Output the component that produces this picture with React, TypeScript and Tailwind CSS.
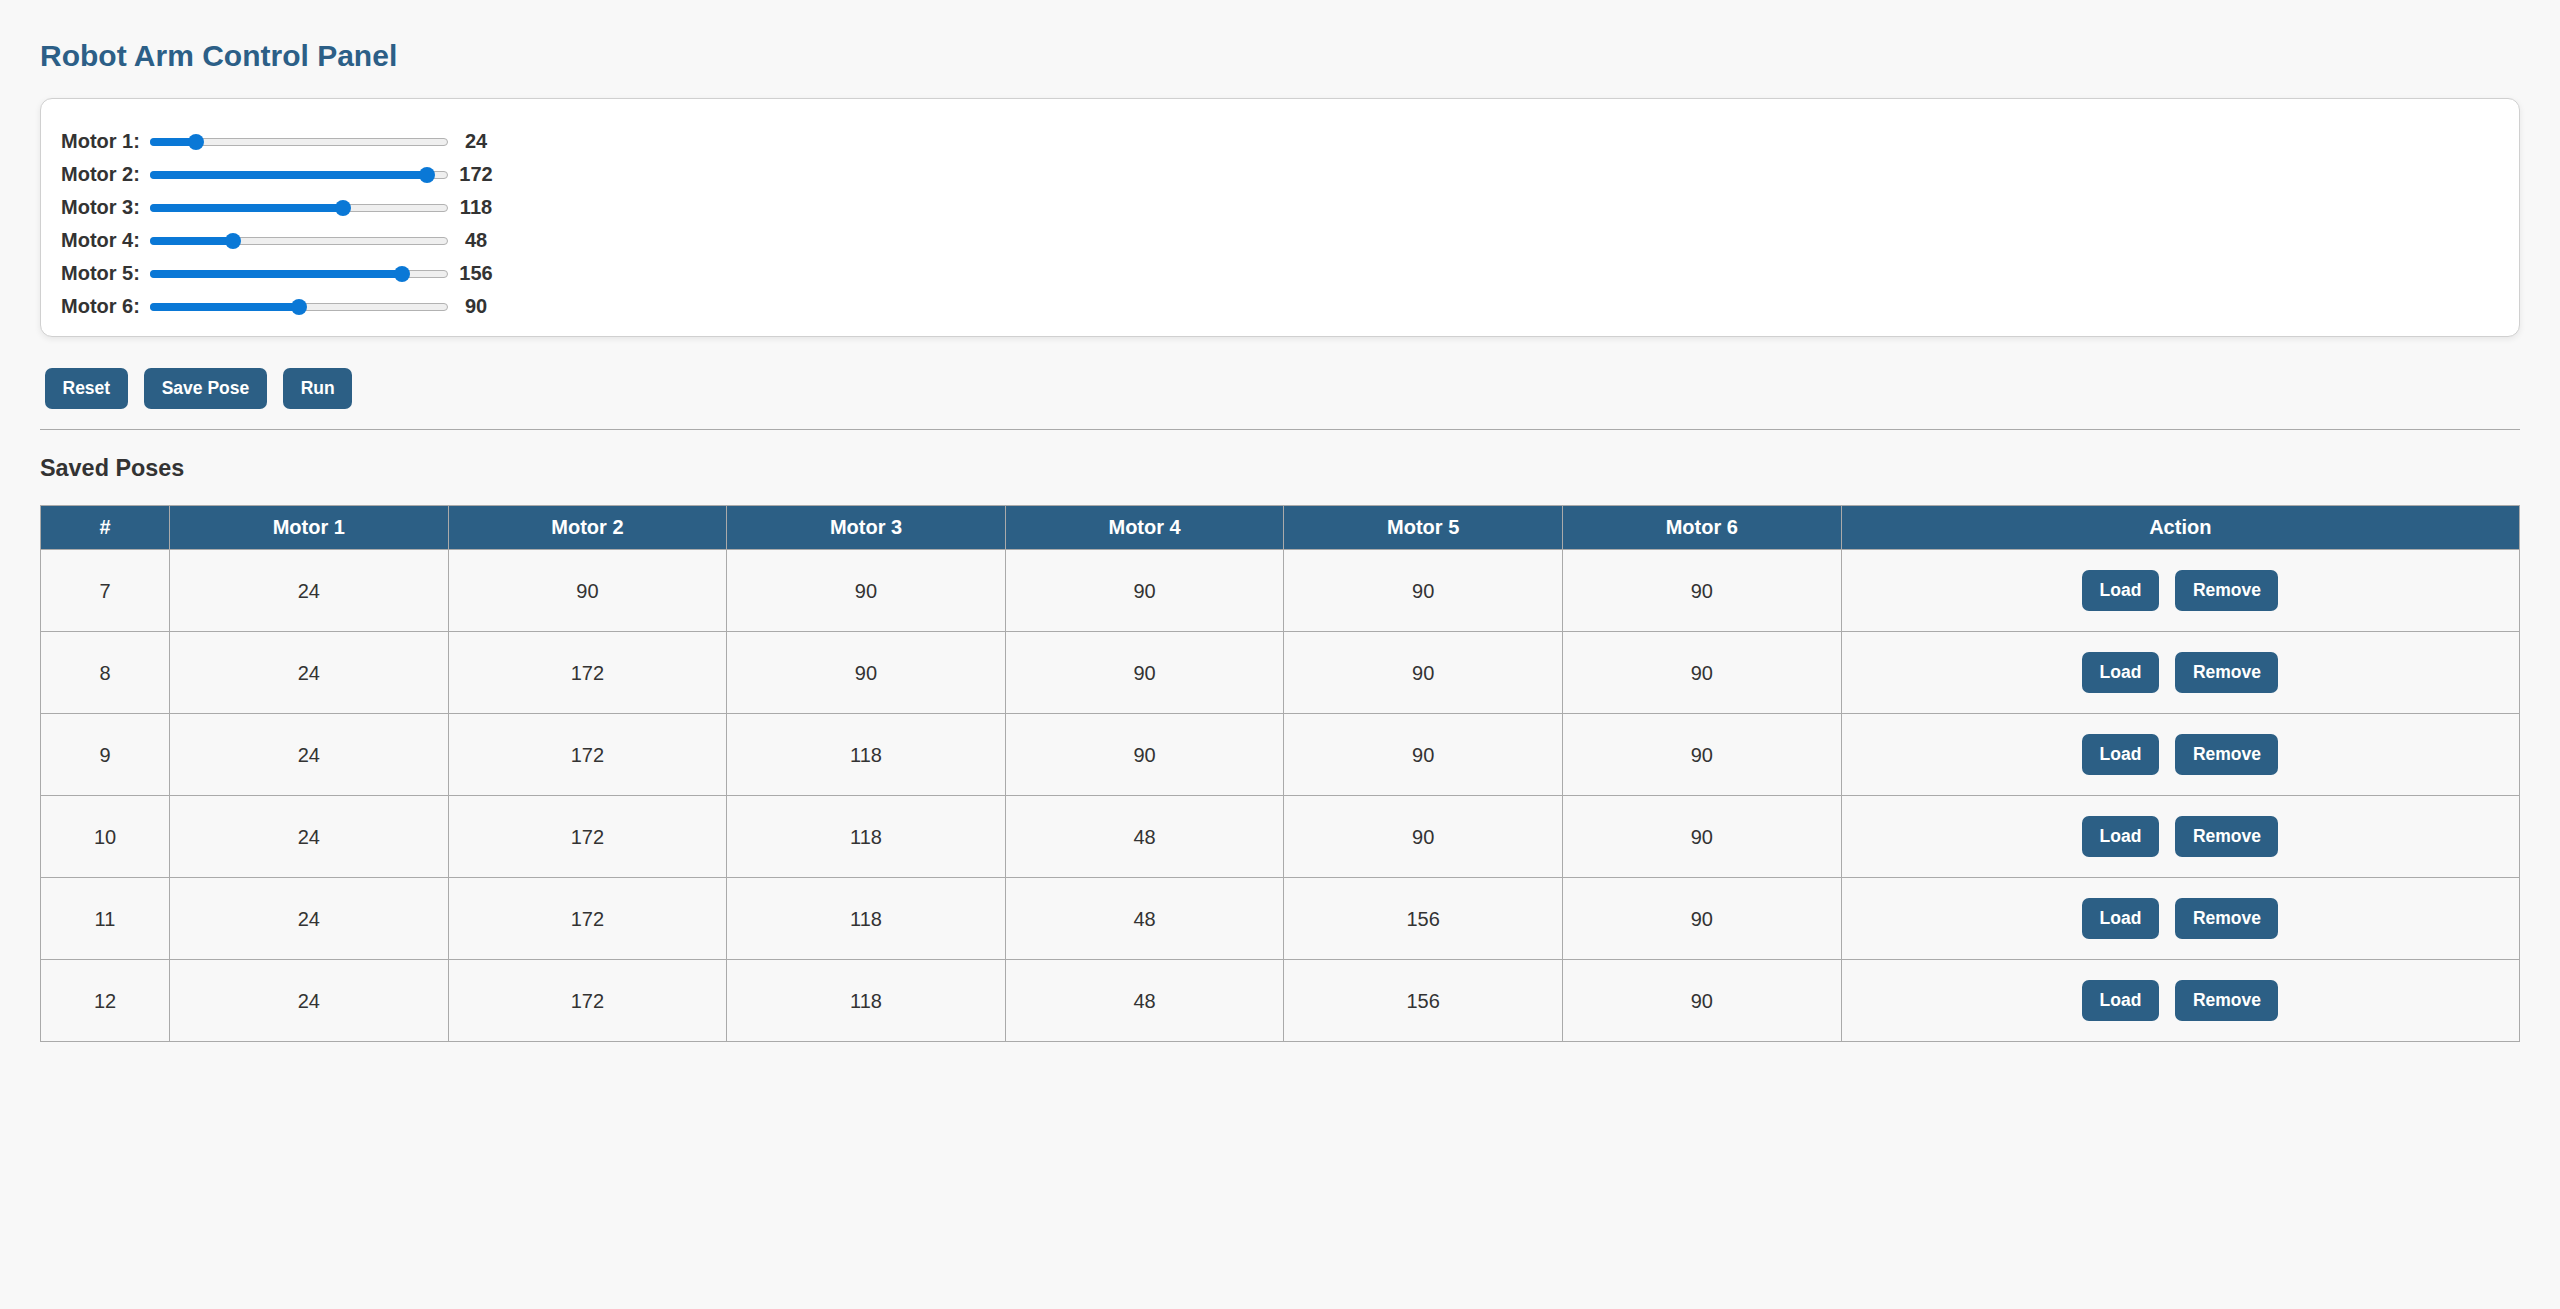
import { useState } from 'react';

const MAX = 180;

const initialMotors = [24, 172, 118, 48, 156, 90];

const initialPoses = [
  { id: 7, m: [24, 90, 90, 90, 90, 90] },
  { id: 8, m: [24, 172, 90, 90, 90, 90] },
  { id: 9, m: [24, 172, 118, 90, 90, 90] },
  { id: 10, m: [24, 172, 118, 48, 90, 90] },
  { id: 11, m: [24, 172, 118, 48, 156, 90] },
  { id: 12, m: [24, 172, 118, 48, 156, 90] },
];

function Slider({ value }: { value: number }) {
  // thumb travels between the two ends of the track
  const center = 8 + (value / MAX) * (298 - 16);
  return (
    <div className="relative w-[298px] h-[8px] ml-[11px]">
      <div className="absolute inset-0 rounded-full bg-[#efefef] border border-[#b2b2b2]" />
      <div className="absolute left-0 top-0 h-full rounded-full bg-[#0a78d6]" style={{ width: center }} />
      <div
        className="absolute top-1/2 w-[16px] h-[16px] -mt-[8px] rounded-full bg-[#0a78d6]"
        style={{ left: center - 8 }}
      />
    </div>
  );
}

function Btn({ children }: { children: React.ReactNode }) {
  return (
    <button className="h-[41px] px-[17.5px] rounded-[7px] bg-[#2c5f85] text-white font-bold text-[17.5px] leading-none">
      {children}
    </button>
  );
}

export default function App() {
  const [motors] = useState(initialMotors);
  const [poses] = useState(initialPoses);

  return (
    <div
      className="min-h-[1309px] bg-[#f8f8f8] text-[#333] px-10 pt-[39px]"
      style={{ fontFamily: '"Liberation Sans", Arial, sans-serif' }}
    >
      <h1 className="text-[30px] leading-[34px] font-bold text-[#2c5f87] mb-[25px]">Robot Arm Control Panel</h1>

      {/* Sliders */}
      <div className="bg-white border border-[#d0d0d0] rounded-[12px] shadow-[0_2px_6px_rgba(0,0,0,0.08)] pl-5 pt-[26px] pb-[13px]">
        {motors.map((v, i) => (
          <div key={i} className="flex items-center h-[33px]">
            <span className="text-[20px] font-bold leading-[23px] w-[78px] whitespace-nowrap">Motor {i + 1}:</span>
            <Slider value={v} />
            <span className="text-[20px] font-bold leading-[23px] ml-[8px] w-[40px] text-center">{v}</span>
          </div>
        ))}
      </div>

      <div className="flex gap-[16.5px] ml-[5px] mt-[31px]">
        <Btn>Reset</Btn>
        <Btn>Save Pose</Btn>
        <Btn>Run</Btn>
      </div>

      <hr className="mt-[20px] border-0 border-t border-[#aaa]" />

      <h3 className="text-[23.4px] leading-[27px] font-bold mt-[25px]">Saved Poses</h3>

      <table className="w-full table-fixed border-collapse mt-[23px] text-[20px]">
        <colgroup>
          <col className="w-[129px]" />
          <col className="w-[278.6px]" />
          <col className="w-[278.6px]" />
          <col className="w-[278.6px]" />
          <col className="w-[278.6px]" />
          <col className="w-[278.6px]" />
          <col className="w-[278.6px]" />
          <col />
        </colgroup>
        <thead>
          <tr className="bg-[#2c5f85] text-white">
            <th className="h-[44px] pb-[2px] border border-[#aaa] font-bold">#</th>
            {[1, 2, 3, 4, 5, 6].map(n => (
              <th key={n} className="h-[44px] pb-[2px] border border-[#aaa] font-bold">Motor {n}</th>
            ))}
            <th className="h-[44px] pb-[2px] border border-[#aaa] font-bold">Action</th>
          </tr>
        </thead>
        <tbody>
          {poses.map(p => (
            <tr key={p.id}>
              <td className="h-[82px] border border-[#aaa] text-center">{p.id}</td>
              {p.m.map((v, i) => (
                <td key={i} className="h-[82px] border border-[#aaa] text-center">{v}</td>
              ))}
              <td className="h-[82px] border border-[#aaa]">
                <div className="flex justify-center gap-[16.5px]">
                  <Btn>Load</Btn>
                  <Btn>Remove</Btn>
                </div>
              </td>
            </tr>
          ))}
        </tbody>
      </table>
    </div>
  );
}
